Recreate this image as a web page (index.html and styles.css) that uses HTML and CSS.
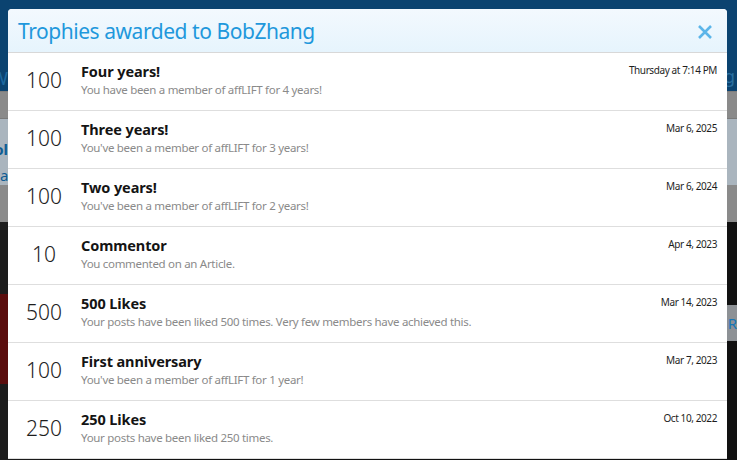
FILE: index.html
```html
<!DOCTYPE html>
<html lang="en">
<head>
<meta charset="utf-8">
<title>Trophies awarded to BobZhang</title>
<link rel="stylesheet" href="styles.css">
</head>
<body>
<div class="site">
  <div class="site-header"><span class="nav-w">W</span><span class="nav-g">g</span></div>
  <div class="site-nav"></div>
  <div class="site-crumbs"><span class="crumb-a">ol</span><span class="crumb-b">a</span></div>
  <div class="site-strip"></div>
  <div class="site-body">
    <div class="left-photo"><div class="red-block"></div></div>
    <div class="right-panel"><span class="btn-r">R</span></div>
  </div>
</div>

<div class="modal">
  <div class="modal-head">
    <h1 class="modal-title">Trophies awarded to BobZhang</h1>
    <svg class="close" width="16" height="16" viewBox="0 0 16 16"><path d="M2 2 L14 14 M14 2 L2 14" stroke="#5cb5e9" stroke-width="2.6" stroke-linecap="butt"/></svg>
  </div>
  <ol class="trophies">
    <li class="trophy"><div class="points">100</div><div class="info"><div class="name">Four years!</div><div class="desc">You have been a member of affLIFT for 4 years!</div></div><div class="date">Thursday at 7:14 PM</div></li>
    <li class="trophy"><div class="points">100</div><div class="info"><div class="name">Three years!</div><div class="desc">You've been a member of affLIFT for 3 years!</div></div><div class="date">Mar 6, 2025</div></li>
    <li class="trophy"><div class="points">100</div><div class="info"><div class="name">Two years!</div><div class="desc">You've been a member of affLIFT for 2 years!</div></div><div class="date">Mar 6, 2024</div></li>
    <li class="trophy"><div class="points">10</div><div class="info"><div class="name">Commentor</div><div class="desc">You commented on an Article.</div></div><div class="date">Apr 4, 2023</div></li>
    <li class="trophy"><div class="points">500</div><div class="info"><div class="name">500 Likes</div><div class="desc">Your posts have been liked 500 times. Very few members have achieved this.</div></div><div class="date">Mar 14, 2023</div></li>
    <li class="trophy"><div class="points">100</div><div class="info"><div class="name">First anniversary</div><div class="desc">You've been a member of affLIFT for 1 year!</div></div><div class="date">Mar 7, 2023</div></li>
    <li class="trophy"><div class="points">250</div><div class="info"><div class="name">250 Likes</div><div class="desc">Your posts have been liked 250 times.</div></div><div class="date">Oct 10, 2022</div></li>
  </ol>
</div>
</body>
</html>
```

FILE: styles.css
```css
html, body {
  margin: 0;
  padding: 0;
  height: 100%;
  overflow: hidden;
}
body {
  font-family: "Noto Sans", "Open Sans", sans-serif;
  background: #111;
}
.site {
  display: flex;
  flex-direction: column;
  height: 460px;
}
.site-header {
  height: 91px;
  background: #0b4370;
  position: relative;
  color: #1e6aa0;
  font-size: 18px;
}
.nav-w { position: absolute; left: 0; top: 66px; width: 8px; overflow: hidden; direction: rtl; }
.nav-g { position: absolute; right: 2px; top: 64px; color: #2a6f9e; }
.site-nav {
  height: 28px;
  background: #8a8a8a;
  border-top: 1px solid #7e7e7e;
  border-bottom: 1px solid #7a7a7a;
  box-sizing: border-box;
}
.site-crumbs {
  height: 66px;
  background: #aab5be;
  position: relative;
  color: #0f5d94;
  font-weight: bold;
  font-size: 15px;
}
.crumb-a { position: absolute; left: 0; top: 20px; width: 8px; overflow: hidden; direction: rtl; }
.crumb-b { position: absolute; left: 0; top: 46px; font-weight: normal; width: 8px; overflow: hidden; }
.site-strip {
  height: 37px;
  background: #8a8a8a;
}
.site-body {
  flex: 1;
  display: flex;
  justify-content: space-between;
  background: #121212;
}
.left-photo {
  width: 40px;
  background: #1c1c1c;
  position: relative;
}
.red-block {
  position: absolute;
  left: 0; top: 72px;
  width: 40px; height: 90px;
  background: #5a0d0d;
}
.right-panel {
  width: 40px;
  position: relative;
  background: #111;
}
.btn-r {
  position: absolute;
  right: 0; top: 83px;
  width: 20px; height: 36px;
  background: #8d9195;
  color: #1577b8;
  font-size: 15px;
  line-height: 36px;
  padding-left: 10px;
  border-radius: 8px 0 0 8px;
  box-sizing: border-box;
  text-align: right;
}

.modal {
  position: absolute;
  left: 8px;
  top: 9px;
  width: 719px;
  background: #fff;
  border-radius: 4px 4px 0 0;
  overflow: hidden;
}
.modal-head {
  height: 44px;
  box-sizing: border-box;
  background: linear-gradient(to bottom, #f3f9fe, #e6f4fd);
  border-bottom: 1px solid #d8d8d8;
  display: flex;
  align-items: center;
  justify-content: space-between;
  padding: 1px 14px 0 10px;
}
.modal-title {
  margin: 0;
  font-size: 21px;
  font-weight: normal;
  color: #1f98dc;
  letter-spacing: -0.45px;
}
.close {
  display: block;
  margin-top: 2px;
}
.trophies {
  list-style: none;
  margin: 0;
  padding: 0;
}
.trophy {
  display: flex;
  align-items: flex-start;
  height: 58px;
  box-sizing: border-box;
  border-bottom: 1px solid #dedede;
  padding: 0 10px 0 0;
}
.points {
  width: 72px;
  flex: none;
  text-align: center;
  font-size: 21px;
  font-weight: 300;
  color: #1d1d1d;
  line-height: 58px;
  height: 57px;
  margin-top: -2px;
}
.info {
  flex: 1;
  padding-top: 8px;
  padding-left: 1px;
}
.name {
  font-size: 14.5px;
  font-weight: bold;
  color: #141414;
  line-height: 20px;
  letter-spacing: -0.1px;
}
.desc {
  font-size: 11.5px;
  color: #8a8a8a;
  line-height: 16px;
  margin-top: 1px;
  letter-spacing: -0.3px;
}
.date {
  font-size: 10px;
  color: #1e1e1e;
  padding-top: 10px;
  line-height: 14px;
  white-space: nowrap;
  letter-spacing: -0.4px;
}
```
